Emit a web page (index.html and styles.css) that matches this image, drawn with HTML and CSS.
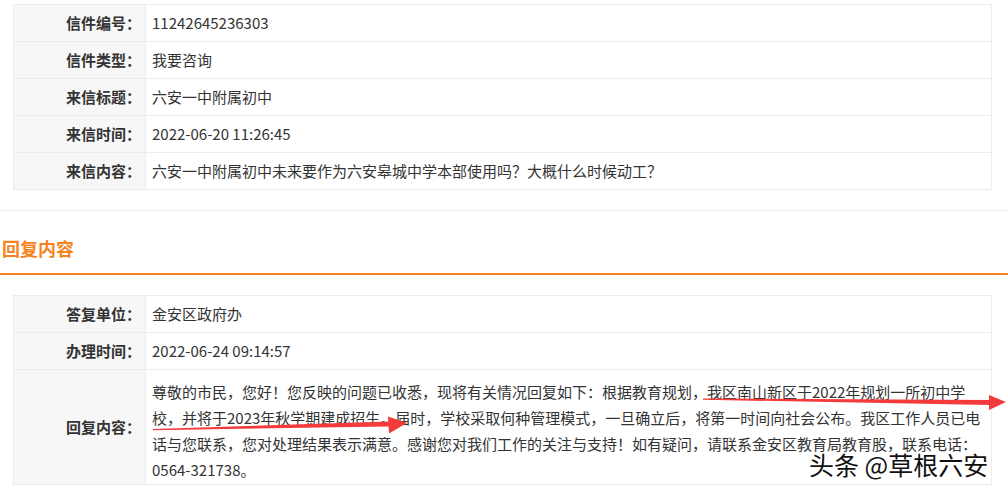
FILE: index.html
```html
<!DOCTYPE html>
<html lang="zh-CN">
<head>
  <meta charset="UTF-8">
  <meta name="viewport" content="width=device-width, initial-scale=1.0">
  <title>信件详情</title>
  <link rel="stylesheet" href="styles.css">
</head>
<body>
  <div class="page">
    <div class="letter">
      <table class="info">
        <tr><th>信件编号：</th><td>11242645236303</td></tr>
        <tr><th>信件类型：</th><td>我要咨询</td></tr>
        <tr><th>来信标题：</th><td>六安一中附属初中</td></tr>
        <tr><th>来信时间：</th><td>2022-06-20 11:26:45</td></tr>
        <tr><th>来信内容：</th><td>六安一中附属初中未来要作为六安皋城中学本部使用吗？大概什么时候动工？</td></tr>
      </table>
    </div>

    <div class="reply">
      <h3 class="reply-head">回复内容</h3>
      <table class="info">
        <tr><th>答复单位：</th><td>金安区政府办</td></tr>
        <tr><th>办理时间：</th><td>2022-06-24 09:14:57</td></tr>
        <tr>
          <th>回复内容：</th>
          <td class="long">尊敬的市民，您好！您反映的问题已收悉，现将有关情况回复如下：根据教育规划，我区南山新区于2022年规划一所初中学<br>校，并将于2023年秋学期建成招生。届时，学校采取何种管理模式，一旦确立后，将第一时间向社会公布。我区工作人员已电<br>话与您联系，您对处理结果表示满意。感谢您对我们工作的关注与支持！如有疑问，请联系金安区教育局教育股，联系电话：<br>0564-321738。</td>
        </tr>
      </table>
    </div>

    <!-- red marker arrows drawn over the reply text -->
    <svg class="marks" width="1008" height="496" viewBox="0 0 1008 496">
      <polygon points="703,398.5 990,400 990,405 703,399.8" fill="#f43a3a"/>
      <polygon points="989,395 1006,402 989,410" fill="#f43a3a"/>
      <polygon points="153,429 389,421.5 389,426.5 153,430.2" fill="#f43a3a"/>
      <polygon points="388,416.5 407,423 389,433.5" fill="#f43a3a"/>
    </svg>

    <div class="watermark">头条 @草根六安</div>
  </div>
</body>
</html>
```

FILE: styles.css
```css
html, body {
  margin: 0;
  padding: 0;
  background: #fff;
  font-family: "Noto Sans CJK SC", "Noto Sans", sans-serif;
  color: #333;
}

.page {
  position: relative;
  width: 1008px;
  height: 496px;
  overflow: hidden;
}

.letter {
  padding: 4px 0 20px 13px;
  border-bottom: 1px solid #ececec;
}

.info {
  width: 979px;
  border-collapse: collapse;
  font-size: 15px;
}

.info tr {
  height: 37px;
}

.info th,
.info td {
  border: 1px solid #ececec;
  padding: 0 6px;
  line-height: 20px;
}

.info th {
  width: 121px;
  background: #f7f7f7;
  text-align: right;
  font-weight: bold;
  padding-right: 4px;
  white-space: nowrap;
}

.info td {
  text-align: left;
  font-weight: normal;
}

.info td.long {
  line-height: 26px;
  padding: 9px 6px 1px 6px;
  white-space: nowrap;
}

.reply-head {
  margin: 0;
  padding: 22px 0 10px 2px;
  line-height: 30px;
  font-size: 18px;
  font-weight: bold;
  color: #f5841f;
  border-bottom: 2px solid #f5841f;
}

.reply .info {
  margin: 20px 0 0 13px;
}

.marks {
  position: absolute;
  top: 0;
  left: 0;
  pointer-events: none;
}

.watermark {
  position: absolute;
  left: 809px;
  top: 451px;
  font-size: 25px;
  line-height: 27px;
  color: #111;
  text-shadow: 0 0 2px #fff, 0 0 2px #fff, 1px 1px 1px #fff;
}
```
